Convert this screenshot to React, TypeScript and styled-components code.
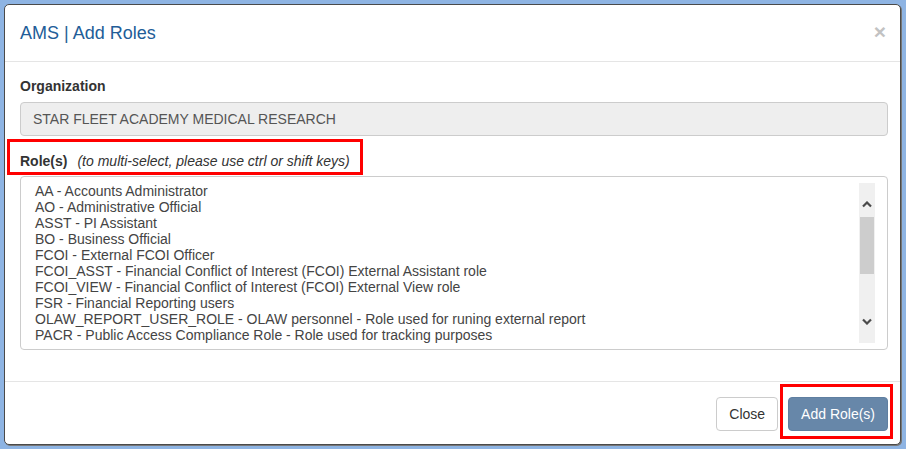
import React from "react";
import styled, { createGlobalStyle } from "styled-components";

const GlobalStyle = createGlobalStyle`
  html, body {
    margin: 0;
    padding: 0;
    background: #8eb4e3;
  }
  body {
    font-family: "Liberation Sans", Arial, sans-serif;
    font-size: 14px;
    color: #333;
  }
  * {
    box-sizing: border-box;
  }
`;

const Backdrop = styled.div`
  width: 906px;
  height: 449px;
  padding: 4px 0 0 4px;
  background: #8eb4e3;
  overflow: hidden;
`;

const Modal = styled.div`
  width: 897px;
  background: #fff;
  border: 1px solid #4a4a4a;
  border-radius: 5px;
  box-shadow: 1px 1px 0 #777;
`;

const Header = styled.div`
  display: flex;
  align-items: flex-start;
  justify-content: space-between;
  padding: 15px 14px 15px 15px;
  border-bottom: 1px solid #e5e5e5;
`;

const Title = styled.h4`
  margin: 0;
  font-size: 18px;
  font-weight: normal;
  line-height: 26px;
  color: #225d98;
`;

const CloseX = styled.span`
  font-size: 21px;
  font-weight: bold;
  line-height: 21px;
  color: #c2c2c2;
  margin-top: 1px;
`;

const Body = styled.div`
  padding: 14px 12px 16px 15px;
`;

const FormGroup = styled.div`
  margin-bottom: 15px;
`;

const Label = styled.label<{ $gap?: number }>`
  position: relative;
  display: inline-block;
  margin-bottom: ${({ $gap }) => $gap ?? 5}px;
  font-weight: bold;
  line-height: 20px;
  color: #333;
`;

const Hint = styled.i`
  font-weight: normal;
  margin-left: 10px;
`;

const Annotation = styled.span<{ $inset: string }>`
  position: absolute;
  inset: ${({ $inset }) => $inset};
  border: 3px solid #f00;
  pointer-events: none;
`;

const ReadOnlyInput = styled.div`
  height: 34px;
  padding: 0 12px;
  display: flex;
  align-items: center;
  background: #eee;
  border: 1px solid #ccc;
  border-radius: 4px;
  color: #555;
`;

const ListBox = styled.div`
  display: flex;
  padding: 6px 12px;
  border: 1px solid #ccc;
  border-radius: 4px;
  background: #fff;
`;

const Options = styled.div`
  flex: 1;
  height: 160px;
  overflow: hidden;
`;

const Option = styled.div`
  padding: 0 2px;
  line-height: 16px;
  white-space: nowrap;
  color: #444;
`;

const Scrollbar = styled.div`
  width: 16px;
  height: 160px;
  display: flex;
  flex-direction: column;
  background: #f0f0f0;
`;

const ArrowButton = styled.div<{ $down?: boolean }>`
  height: 34px;
  display: flex;
  justify-content: center;
  align-items: ${({ $down }) => ($down ? "flex-end" : "flex-start")};
  padding: ${({ $down }) => ($down ? "0 0 18px" : "18px 0 0")};
`;

const Track = styled.div`
  flex: 1;
  padding: 0 1px;
`;

const Thumb = styled.div`
  height: 57px;
  background: #cdcdcd;
`;

const Footer = styled.div`
  display: flex;
  justify-content: flex-end;
  gap: 10px;
  padding: 15px 12px 13px 15px;
  border-top: 1px solid #e5e5e5;
`;

const Button = styled.button<{ $primary?: boolean }>`
  position: relative;
  height: 34px;
  padding: 6px 12px;
  font-family: "Liberation Sans", Arial, sans-serif;
  font-size: 14px;
  line-height: 20px;
  border-radius: 4px;
  border: 1px solid ${({ $primary }) => ($primary ? "#5f7fa1" : "#ccc")};
  background: ${({ $primary }) => ($primary ? "#6787a9" : "#fff")};
  color: ${({ $primary }) => ($primary ? "#fff" : "#333")};
`;

const Chevron = ({ down }: { down?: boolean }) => (
  <svg width="10" height="7" viewBox="0 0 10 7">
    <path
      d={down ? "M1 1.5 L5 5.5 L9 1.5" : "M1 5.5 L5 1.5 L9 5.5"}
      fill="none"
      stroke="#4a4a4a"
      strokeWidth="2.2"
    />
  </svg>
);

const roles = [
  "AA - Accounts Administrator",
  "AO - Administrative Official",
  "ASST - PI Assistant",
  "BO - Business Official",
  "FCOI - External FCOI Officer",
  "FCOI_ASST - Financial Conflict of Interest (FCOI) External Assistant role",
  "FCOI_VIEW - Financial Conflict of Interest (FCOI) External View role",
  "FSR - Financial Reporting users",
  "OLAW_REPORT_USER_ROLE - OLAW personnel - Role used for runing external report",
  "PACR - Public Access Compliance Role - Role used for tracking purposes",
];

function App() {
  return (
    <>
      <GlobalStyle />
      <Backdrop>
        <Modal>
          <Header>
            <Title>AMS | Add Roles</Title>
            <CloseX>×</CloseX>
          </Header>
          <Body>
            <FormGroup>
              <Label $gap={6}>Organization</Label>
              <ReadOnlyInput>STAR FLEET ACADEMY MEDICAL RESEARCH</ReadOnlyInput>
            </FormGroup>
            <FormGroup>
              <Label>
                Role(s)
                <Hint>(to multi-select, please use ctrl or shift keys)</Hint>
                <Annotation $inset="-12px -13px -4px -13px" />
              </Label>
              <ListBox>
                <Options>
                  {roles.map((r) => (
                    <Option key={r}>{r}</Option>
                  ))}
                </Options>
                <Scrollbar>
                  <ArrowButton>
                    <Chevron />
                  </ArrowButton>
                  <Track>
                    <Thumb />
                  </Track>
                  <ArrowButton $down>
                    <Chevron down />
                  </ArrowButton>
                </Scrollbar>
              </ListBox>
            </FormGroup>
          </Body>
          <Footer>
            <Button>Close</Button>
            <Button $primary>
              Add Role(s)
              <Annotation $inset="-14px -6px -9px -9px" />
            </Button>
          </Footer>
        </Modal>
      </Backdrop>
    </>
  );
}

export default App;
